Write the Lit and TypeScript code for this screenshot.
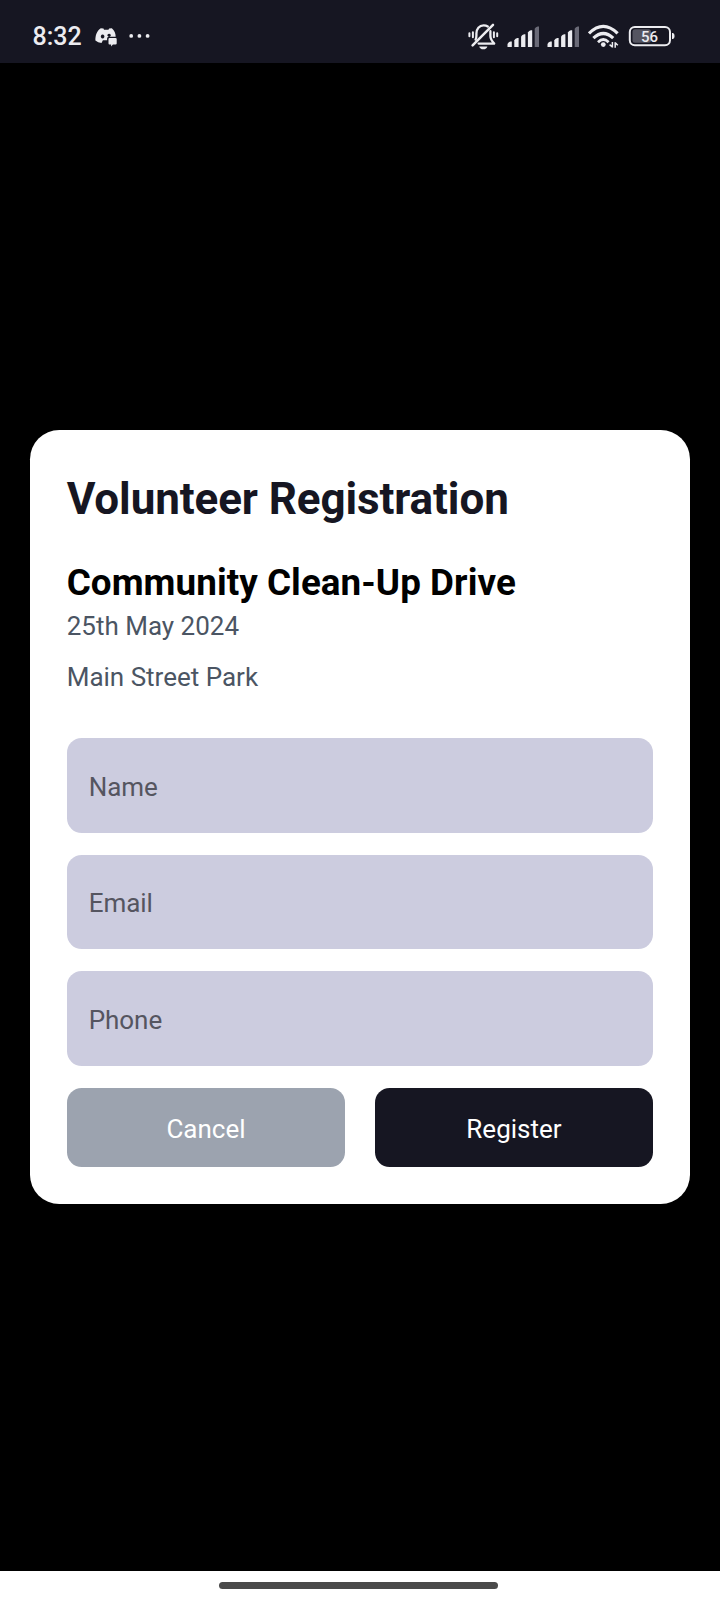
import { LitElement, html, css, svg } from "lit";
import { customElement, property } from "lit/decorators.js";

@customElement("signal-bars")
class SignalBars extends LitElement {
  static styles = css`
    :host { display: block; width: 32px; height: 22px; }
    svg { display: block; }
  `;
  render() {
    const tops = [15.6, 12, 8.3, 4.2, 0.5];
    return html`<svg width="32" height="22" viewBox="0 0 32 22">
      ${tops.map((t, i) => {
        const x = 0.5 + i * 6.8;
        return svg`<path fill=${i === 4 ? "#6a6a77" : "#ececf0"}
          d="M${x} ${t + 2.3}Q${x + 1} ${t + 0.4} ${x + 3} ${t}H${x + 4.3}V21H${x}Z"></path>`;
      })}
    </svg>`;
  }
}

@customElement("status-bar")
class StatusBar extends LitElement {
  static styles = css`
    :host {
      display: flex; align-items: flex-start; height: 63px; box-sizing: border-box;
      padding: 22px 44px 0 32.5px; background: #161622; color: #ececf0;
    }
    svg { display: block; flex: none; }
    .time { font-size: 25px; line-height: 29px; font-weight: 500; width: 62px; }
    .chat { margin-right: 12.5px; }
    .spacer { flex: 1; }
    .bell { margin-right: 8px; }
    .sig { margin-top: 4px; margin-right: 8px; }
    .wifi { margin: 0 8px 0 1px; }
    .level { font: 500 15.5px Roboto, sans-serif; }
  `;
  render() {
    return html`
      <div class="time">8:32</div>
      <svg class="chat" width="22" height="28" viewBox="94.5 22 22 28">
        <path fill="#ececf0" fill-rule="evenodd" d="M100.3 28.2 L103 28.6 L103.5 29.8 H108 L108.6 28.6 L111.3 28.2 C113.8 30.3 115.2 33.3 115.2 36.8 H108.2 Q106.6 36.8 106.6 38.4 V40.2 H102.4 L101 43 Q97.5 42.7 94.9 40.6 C94.7 35.5 96.3 30.6 100.3 28.2Z
        M102.1 34.6 a1.8 2 0 1 0 .01 0Z M108.6 33.8 a1.7 1.5 0 1 0 .01 0Z"></path>
        <path fill="#ececf0" d="M109 38.1H115Q116.2 38.1 116.2 39.1V43.5Q116.2 44.5 115 44.5H112.4L110.6 46.4V44.5H109Q108 44.5 108 43.5V39.1Q108 38.1 109 38.1Z"></path>
      </svg>
      <svg width="22" height="28" viewBox="129 22 22 28" fill="#ececf0">
        <circle cx="131.2" cy="35.9" r="1.9"></circle>
        <circle cx="139.4" cy="35.9" r="1.9"></circle>
        <circle cx="147.6" cy="35.9" r="1.9"></circle>
      </svg>
      <div class="spacer"></div>
      <svg class="bell" width="31" height="30" viewBox="468 22 31 30" fill="none" stroke="#ececf0" stroke-width="2.3" stroke-linecap="round" stroke-linejoin="round">
        <path d="M475.6 39.6 Q476.4 38 476.4 35.5 V33.6 C476.4 29 479.2 25.3 483.6 25.3 C485.3 25.3 486.6 25.7 487.8 26.5"></path>
        <path d="M490.4 31.2 V36 Q490.4 39.3 494.2 43.6 H478.6"></path>
        <path stroke-width="2.5" d="M493 24.8 L472.6 45.3"></path>
        <path stroke-width="2" d="M472.9 32.2V37.2 M469.4 33.3V36.2 M493.9 32.2V37.2 M497.2 33.3V36.2"></path>
        <path fill="#ececf0" stroke="none" d="M479.2 46.4H487.4Q486.6 49.2 483.3 49.2T479.2 46.4Z"></path>
      </svg>
      <signal-bars class="sig"></signal-bars>
      <signal-bars class="sig"></signal-bars>
      <svg class="wifi" width="32" height="28" viewBox="588 22 32 28" fill="none" stroke="#ececf0">
        <path stroke-width="3.2" d="M589 33.4 Q603.3 19.4 617.6 33.4"></path>
        <path stroke-width="3.2" d="M593.4 38.2 Q603.3 28.8 613.2 38.2"></path>
        <path stroke-width="2.8" d="M598 42.2 Q603.3 37 608.6 42.2"></path>
        <circle fill="#ececf0" stroke="none" cx="603.3" cy="44.6" r="2.4"></circle>
        <path stroke-width="1.5" d="M612.4 42V47.6M612.6 47.3L609.6 44.6M615.2 47.8V42.2M615 42.5L617.8 45.2"></path>
      </svg>
      <svg width="48" height="28" viewBox="628 22 48 28">
        <rect x="632.5" y="29.3" width="18.5" height="13.4" rx="2.5" fill="#555561"></rect>
        <rect x="629.8" y="26.9" width="40.2" height="18.4" rx="5" fill="none" stroke="#ececf0" stroke-width="2"></rect>
        <path d="M672 33H673Q674.6 33.4 674.6 36T673 39H672Z" fill="#ececf0"></path>
        <text class="level" x="649.4" y="42" text-anchor="middle" textLength="17" lengthAdjust="spacingAndGlyphs" fill="#ececf0">56</text>
      </svg>
    `;
  }
}

@customElement("form-field")
class FormField extends LitElement {
  @property() label = "";
  static styles = css`
    :host { display: block; }
    input {
      display: block; width: 100%; height: 94.6px; box-sizing: border-box; margin: 0;
      padding: 3px 22px 0; border: 0; border-radius: 14.7px; background: #ccccdf;
      font: 400 26px Roboto, sans-serif; letter-spacing: -0.04px; color: #161622; outline: none;
    }
    input::placeholder { color: #555560; opacity: 1; }
  `;
  render() {
    return html`<input placeholder=${this.label} aria-label=${this.label} />`;
  }
}

@customElement("app-root")
class AppRoot extends LitElement {
  static styles = css`
    :host {
      display: flex; flex-direction: column; height: 1600px; width: 720px;
      background: #000; font-family: Roboto, sans-serif;
    }
    .stage { flex: 1; padding: 367px 30px 0; }
    .card {
      box-sizing: border-box; height: 774px; padding: 38px 36.7px 0;
      background: #fff; border-radius: 29.3px;
    }
    h1, h2, p { margin: 0; }
    h1 { font-size: 44px; line-height: 62px; font-weight: 700; letter-spacing: -0.1px; color: #161622; }
    h2 { margin-top: 30.5px; font-size: 36.8px; line-height: 44px; font-weight: 700; letter-spacing: 0.06px; color: #000; }
    p { font-size: 26px; line-height: 36px; color: #4b5563; }
    .date { margin-top: 3.5px; }
    .place { margin-top: 15px; }
    .fields { display: grid; gap: 22px; margin-top: 43px; }
    .actions { display: grid; grid-template-columns: 1fr 1fr; gap: 29.3px; margin-top: 22px; }
    button {
      height: 79px; border: 0; margin: 0; padding: 3px 0 0; border-radius: 14.7px;
      font: 400 26px Roboto, sans-serif; color: #fff;
    }
    .cancel { background: #9ca3af; }
    .register { background: #161622; }
    .nav { height: 29px; background: #fff; display: flex; justify-content: center; }
    .handle { width: 279px; height: 7px; margin: 11px 4px 0 0; border-radius: 4px; background: #4a4a4a; }
  `;
  render() {
    return html`
      <status-bar></status-bar>
      <main class="stage">
        <section class="card">
          <h1>Volunteer Registration</h1>
          <h2>Community Clean-Up Drive</h2>
          <p class="date">25th May 2024</p>
          <p class="place">Main Street Park</p>
          <div class="fields">
            ${["Name", "Email", "Phone"].map((l) => html`<form-field .label=${l}></form-field>`)}
          </div>
          <div class="actions">
            <button class="cancel">Cancel</button>
            <button class="register">Register</button>
          </div>
        </section>
      </main>
      <div class="nav"><div class="handle"></div></div>
    `;
  }
}
